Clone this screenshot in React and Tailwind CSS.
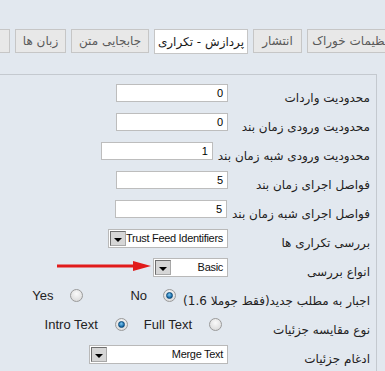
import React from "react";

const fa = { fontFamily: '"DejaVu Sans", sans-serif' };
const en = { fontFamily: '"Liberation Sans", Arial, sans-serif' };

function TextInput({ value, w }) {
  return (
    <div
      dir="ltr"
      className={`${w} h-[18px] bg-white border border-[#bdbdbd] text-right pr-[4px] text-[11px] leading-[16px] text-black`}
      style={en}
    >
      {value}
    </div>
  );
}

function Select({ value, w }) {
  return (
    <div
      dir="ltr"
      className={`${w} h-[19px] bg-white border border-[#b9b9b9] flex items-center p-[1px]`}
    >
      <div className="w-[16px] h-[15px] shrink-0 bg-[#d6d6d6] border border-t-[#6e6e6e] border-l-[#6e6e6e] border-r-[#a8a8a8] border-b-[#a8a8a8] flex items-center justify-center">
        <div className="w-0 h-0 border-l-[4px] border-r-[4px] border-t-[4px] border-l-transparent border-r-transparent border-t-black mt-[2px]" />
      </div>
      <div
        className="flex-1 text-right pr-[3px] text-[11px] leading-[15px] tracking-[-0.3px] text-[#111] whitespace-nowrap"
        style={en}
      >
        {value}
      </div>
    </div>
  );
}

function Radio({ checked }) {
  return (
    <div className="w-[13px] h-[13px] shrink-0 rounded-full border border-[#9a9a9a] bg-[radial-gradient(circle_at_50%_35%,#fafafa,#d4d4d4)] flex items-center justify-center">
      {checked && (
        <div className="w-[7px] h-[7px] rounded-full bg-[radial-gradient(circle_at_45%_35%,#7cc8f2,#0d5f9e_75%)] border border-[#0b4a7a]" />
      )}
    </div>
  );
}

function Row({ label, children, fieldMr = "mr-[5px]", fieldMt = "mt-0" }) {
  return (
    <div dir="rtl" className="flex items-start h-[29px]">
      <div
        className="min-w-[137px] mt-[7px] text-[12px] leading-[15px] text-[#222] whitespace-nowrap"
        style={fa}
      >
        {label}
      </div>
      <div className={`${fieldMr} ${fieldMt}`}>{children}</div>
    </div>
  );
}

function Tab({ children, w, active, extra = "" }) {
  return (
    <div
      className={`${w} ${extra} shrink-0 border border-[#c6c6c6] flex items-center justify-center text-[12px] whitespace-nowrap ${
        active ? "bg-white h-[25px] text-[#1a1a1a]" : "bg-[#e8e8e8] h-[24px] text-[#5a5a5a]"
      }`}
      style={fa}
    >
      {children}
    </div>
  );
}

export default function App() {
  return (
    <div className="relative w-[385px] h-[371px] overflow-hidden bg-[#e2e8ef]">
      <div dir="rtl" className="flex items-start gap-[5px] mt-[29px] overflow-hidden w-[385px]">
        <Tab w="w-[90px]" extra="-mr-[12px]">تنظیمات خوراک</Tab>
        <Tab w="w-[49px]">انتشار</Tab>
        <Tab w="w-[94px]" active>پردازش - تکراری</Tab>
        <Tab w="w-[78px]">جابجایی متن</Tab>
        <Tab w="w-[51px]">زبان ها</Tab>
        <Tab w="w-[60px]">&nbsp;</Tab>
      </div>

      <div dir="rtl" className="mt-[20px] mr-[8px] border-t border-r border-[#c4c9cf] pt-[9px] pr-[6px]">
        <Row label="محدودیت واردات">
          <TextInput value="0" w="w-[112px]" />
        </Row>
        <Row label="محدودیت ورودی زمان بند">
          <TextInput value="0" w="w-[112px]" />
        </Row>
        <Row label="محدودیت ورودی شبه زمان بند">
          <TextInput value="1" w="w-[112px]" />
        </Row>
        <Row label="فواصل اجرای زمان بند">
          <TextInput value="5" w="w-[112px]" />
        </Row>
        <Row label="فواصل اجرای شبه زمان بند">
          <TextInput value="5" w="w-[112px]" />
        </Row>
        <Row label="بررسی تکراری ها">
          <Select value="Trust Feed Identifiers" w="w-[120px]" />
        </Row>
        <Row label="انواع بررسی">
          <Select value="Basic" w="w-[75px]" />
        </Row>
        <Row label="اجبار به مطلب جدید(فقط جوملا 1.6)" fieldMr="mr-[7px]" fieldMt="mt-[1px]">
          <div className="flex items-center h-[15px]">
            <Radio checked />
            <span className="mr-[16px] text-[13px] leading-[15px] text-[#222]" style={en}>No</span>
            <div className="mr-[47px]"><Radio /></div>
            <span className="mr-[17px] text-[13px] leading-[15px] text-[#222]" style={en}>Yes</span>
          </div>
        </Row>
        <Row label="نوع مقایسه جزئیات" fieldMr="mr-[11px]" fieldMt="mt-[1px]">
          <div className="flex items-center h-[15px]">
            <Radio />
            <span className="mr-[17px] text-[13px] leading-[15px] text-[#222]" style={en}>Full Text</span>
            <div className="mr-[16px]"><Radio checked /></div>
            <span className="mr-[17px] text-[13px] leading-[15px] text-[#222]" style={en}>Intro Text</span>
          </div>
        </Row>
        <Row label="ادغام جزئیات">
          <Select value="Merge Text" w="w-[139px]" />
        </Row>
      </div>

      <svg className="absolute left-[55px] top-[258px]" width="100" height="16" viewBox="0 0 100 16">
        <line x1="2" y1="8" x2="82" y2="8" stroke="#e11b1b" strokeWidth="3" />
        <polygon points="78,3 96,8 78,13" fill="#e11b1b" />
      </svg>
    </div>
  );
}
